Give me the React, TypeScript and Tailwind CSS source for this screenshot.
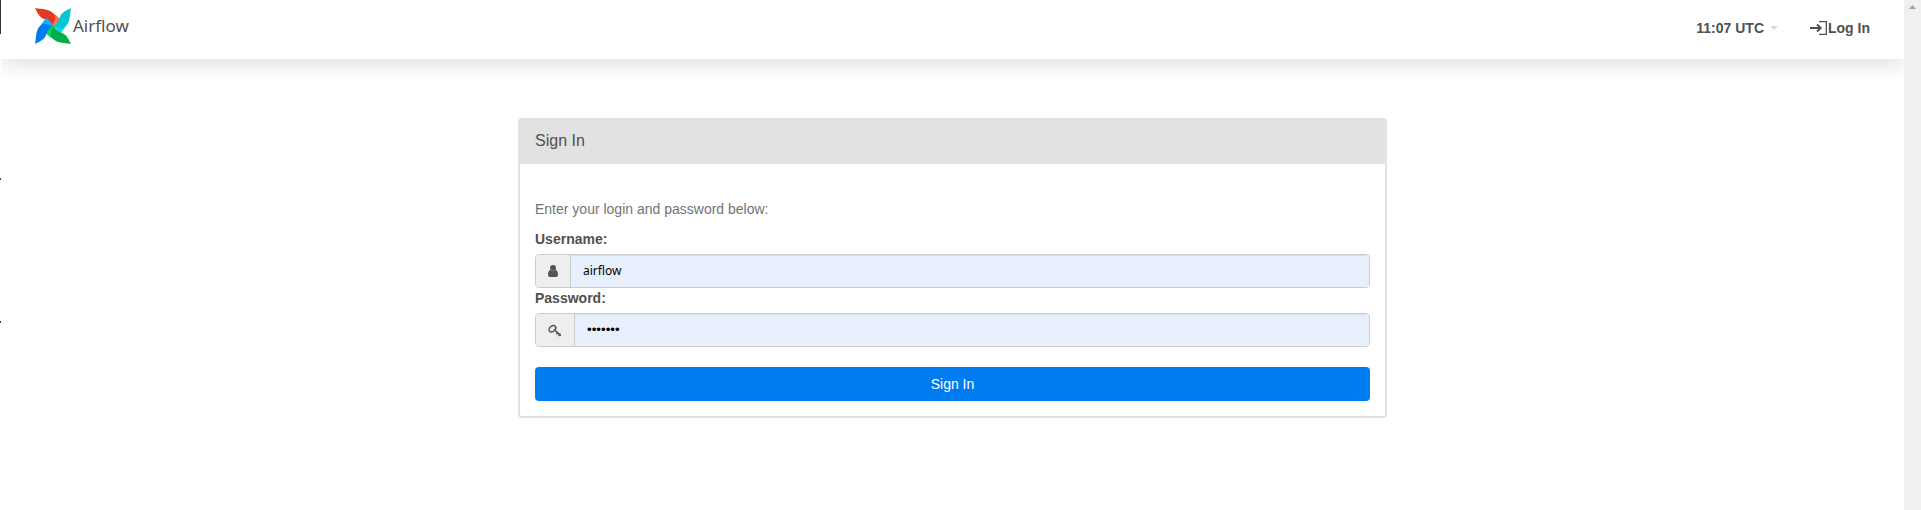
import React from "react";

const blades = [
  { angle: 0, base: "#e43921", fold: "#ff7557" },
  { angle: 90, base: "#00c7d4", fold: "#11d5e0" },
  { angle: 180, base: "#00ad46", fold: "#04d659" },
  { angle: 270, base: "#017cee", fold: "#0cb6ff" },
];

function Logo() {
  return (
    <svg className="h-9 w-9 shrink-0" viewBox="0 0 36 36">
      {blades.map((b) => (
        <g key={b.angle} transform={`rotate(${b.angle} 18 18)`}>
          <path d="M18.500 5.500C22 8 26 10.500 25.500 12C23.500 15 21 15.500 18 18C15 15 16 9 18.500 5.500Z" fill={b.fold} />
          <path d="M0 0C7 1.500 14 .5 18.500 5.500C22.500 9.500 18.500 13.500 18 18C15.500 14 12.500 12 9 11C4.500 9.500 2.500 5 0 0Z" fill={b.base} />
        </g>
      ))}
    </svg>
  );
}

function Navbar() {
  return (
    <header className="flex h-[59px] items-center justify-between bg-white pr-[34px] pl-[34px] shadow-[0_6px_20px_rgba(0,0,0,0.12)]">
      <div className="flex items-center gap-[2px] pb-[7px]">
        <Logo />
        <span className="font-['Noto_Sans',sans-serif] text-[17px] leading-[20px] text-[#51504f]">Airflow</span>
      </div>
      <nav className="flex items-center pb-[3px] text-[14px] leading-5 font-bold">
        <div className="flex items-center">
          <span>11:07 UTC</span>
          <svg className="ml-[6px] h-1 w-2" viewBox="0 0 8 4">
            <path d="M0 0h8L4 4z" fill="#e2d2e2" />
          </svg>
        </div>
        <a className="ml-8 flex items-center">
          <svg className="h-[14px] w-[18px]" viewBox="0 0 18 14" fill="none" stroke="#51504f">
            <path d="M0 7h11M7 3.500L10.800 7L7 10.500" strokeWidth="1.800" />
            <path d="M9 .7h7.300v12.600H9" strokeWidth="1.300" />
          </svg>
          <span>Log In</span>
        </a>
      </nav>
    </header>
  );
}

function UserIcon() {
  return (
    <svg className="h-3 w-[10px]" viewBox="0 0 10 12" fill="#555">
      <circle cx="5" cy="3" r="3" />
      <path d="M2.400 5Q5 7.300 7.600 5Q10 5.500 10 9.500Q10 12 8 12H2Q0 12 0 9.500Q0 5.500 2.400 5Z" />
    </svg>
  );
}

function KeyIcon() {
  return (
    <svg className="h-[13px] w-[14px]" viewBox="0 0 14 13" fill="none" stroke="#555">
      <ellipse cx="4.400" cy="4.800" rx="3.800" ry="2.700" transform="rotate(-42 4.400 4.800)" strokeWidth="1.500" />
      <path d="M6 5.500L12.800 11.600M8.300 10.200L10.300 8M10.500 12L12.500 9.800" strokeWidth="1.500" />
    </svg>
  );
}

type FieldProps = { label: string; icon: React.ReactNode; addon: string; children: React.ReactNode };

function Field({ label, icon, addon, children }: FieldProps) {
  return (
    <div>
      <div className="mb-[5px] text-[14px] leading-5 font-bold">{label}</div>
      <div className="flex h-[34px] overflow-hidden rounded-[4px] border border-[#ccc]">
        <div className={`flex items-center justify-center border-r border-[#ccc] bg-[#eee] ${addon}`}>{icon}</div>
        <div className="flex flex-1 items-center bg-[#e8f0fe] pl-3 text-[13.333px] text-black shadow-[inset_0_1px_1px_rgba(0,0,0,0.075)]">
          {children}
        </div>
      </div>
    </div>
  );
}

export default function App() {
  return (
    <div className="flex h-[510px] overflow-hidden bg-white font-['Liberation_Sans',Arial,sans-serif] text-[#51504f]">
      <div className="flex w-px flex-col">
        <div className="h-[34px] bg-[#35343a]" />
        <div className="mt-[144px] h-[2px] bg-[#444]" />
        <div className="mt-[141px] h-[2px] bg-[#444]" />
      </div>
      <div className="w-[1903px] overflow-hidden">
        <Navbar />
        <main className="mx-auto mt-[59px] h-[300px] w-[869px] overflow-hidden rounded-[4px] border-2 border-[#e2e2e2]">
          <h1 className="h-[44px] bg-[#e2e2e2] pt-[11px] pl-[15px] text-[16px] leading-5">Sign In</h1>
          <form className="px-[15px] pt-[35px]">
            <p className="mb-[10px] text-[14px] leading-5 text-[#757473]">Enter your login and password below:</p>
            <Field label="Username:" icon={<UserIcon />} addon="w-[35px]">
              <span className="font-['Noto_Sans',sans-serif] text-[12px]">airflow</span>
            </Field>
            <Field label="Password:" icon={<KeyIcon />} addon="w-[39px]">
              <span className="text-[13.333px]">•••••••</span>
            </Field>
            <button type="button" className="mt-5 block h-[34px] w-full rounded-[4px] bg-[#017cee] text-[14px] leading-5 text-white">
              Sign In
            </button>
          </form>
        </main>
      </div>
      <aside className="flex w-[17px] justify-center bg-[#f0f0f0] pt-[5px]">
        <svg className="h-1 w-[7px]" viewBox="0 0 7 4">
          <path d="M0 4h7L3.500 0z" fill="#a3a3a3" />
        </svg>
      </aside>
    </div>
  );
}
